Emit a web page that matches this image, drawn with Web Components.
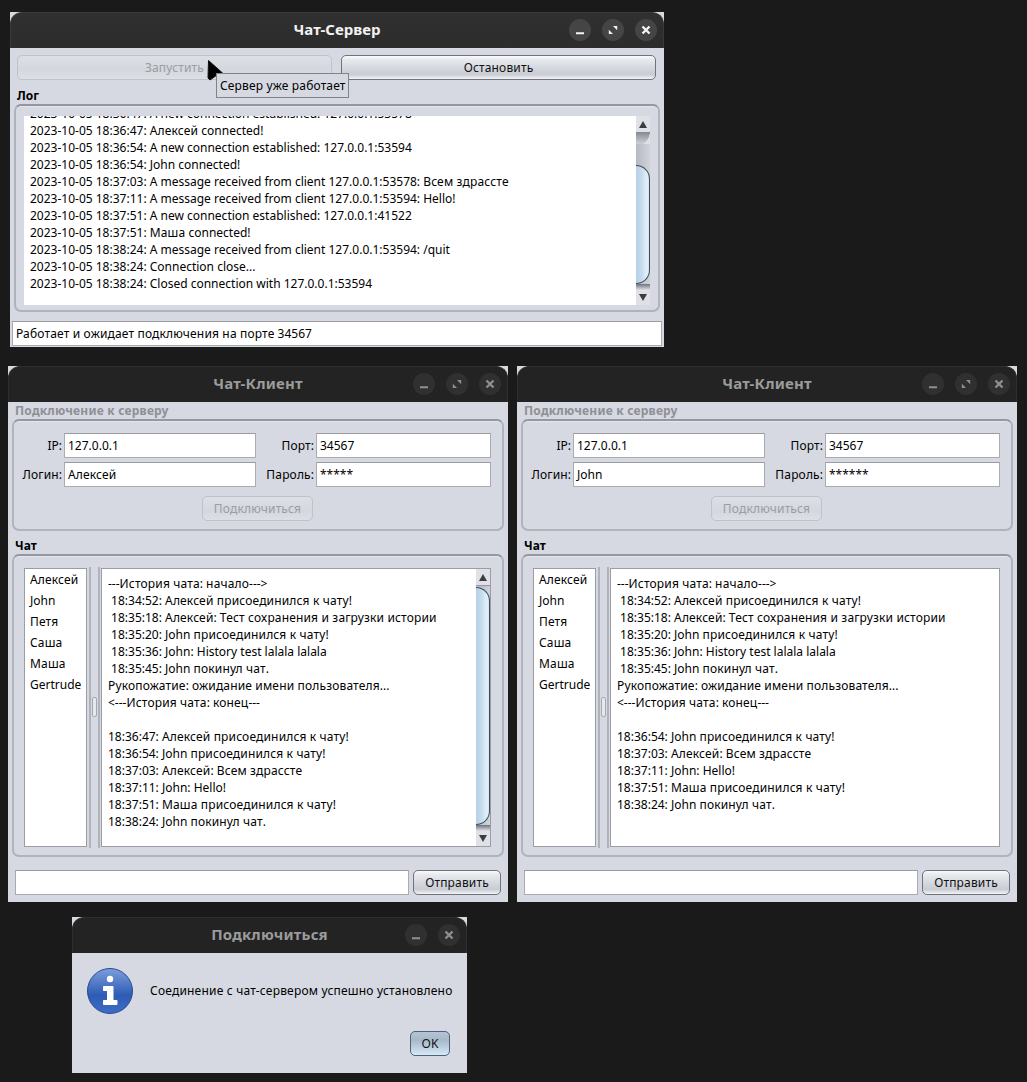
<!DOCTYPE html>
<html lang="ru">
<head>
<meta charset="utf-8">
<title>Чат</title>
<style>
    html, body { margin: 0; height: 100%; }
    body {
        position: relative;
        height: 1082px;
        overflow: hidden;
        background: #1a1a1a;
        color: #000;
        font: 12px/17px "Noto Sans", "Open Sans", sans-serif;
    }
    .cursor { position: absolute; left: 207px; top: 60px; }
    .tip {
        position: absolute; left: 216px; top: 73px; width: 133px; height: 25px;
        box-sizing: border-box; border: 1px solid #7f838a; background: #d6d9e1;
        padding: 3px 0 0 3px; white-space: nowrap;
    }
</style>
</head>
<body>

<template id="desk-window-tpl">
    <style>
        :host {
            position: absolute;
            display: flex;
            flex-direction: column;
            box-sizing: border-box;
            background: #d6d9e1;
        }
        .bar {
            flex: 0 0 auto;
            position: relative;
            display: flex;
            align-items: center;
            justify-content: center;
            height: 36px;
            box-sizing: border-box;
            padding-bottom: 4px;
            background: #232323;
            border: 1px solid #2e2e2e;
            border-bottom: 0;
            border-radius: 12px 12px 0 0;
            color: #9b9b9b;
            font: bold 15px "Noto Sans", sans-serif;
            letter-spacing: .2px;
        }
        :host([active]) .bar {
            background: linear-gradient(#303030, #2c2c2c);
            border-color: #3a3a3a;
            color: #f2f2f2;
            letter-spacing: 0;
        }
        .btns {
            position: absolute;
            right: 6px;
            top: 6px;
            display: flex;
            gap: 11px;
        }
        .btn { width: 22px; height: 22px; border-radius: 50%; background: #303030; display: block; }
        .btn path { stroke: #8f8f8f; fill: none; stroke-width: 2; }
        .btn path.x { stroke-width: 2.400; }
        .btn .f { fill: #8f8f8f; stroke: none; }
        :host([active]) .btn { background: #454545; }
        :host([active]) .btn path { stroke: #f4f4f4; }
        :host([active]) .btn .f { fill: #f4f4f4; stroke: none; }
        .body { flex: 1 1 auto; min-height: 0; display: flex; flex-direction: column; }
    </style>
    <div class="bar">
        <span id="name"></span>
        <div class="btns">
            <svg class="btn" viewBox="0 0 22 22"><path d="M7 14.300h8"/></svg>
            <svg class="btn" id="max" viewBox="0 0 22 22"><path class="f" d="M11 7h4.200v4.200zM6.800 10.800V15H11z"/></svg>
            <svg class="btn" viewBox="0 0 22 22"><path class="x" d="M7.500 7.500l7 7M14.500 7.500l-7 7"/></svg>
        </div>
    </div>
    <div class="body"><slot></slot></div>
</template>

<template id="push-button-tpl">
    <style>
        :host {
            display: flex;
            align-items: center;
            justify-content: center;
            box-sizing: border-box;
            height: 25px;
            border: 1px solid #6f737a;
            border-radius: 5px;
            background: linear-gradient(#fbfbfc 0, #e9ebef 14%, #d3d6dd 55%, #c9ccd4 80%, #f2f3f6 100%);
            color: #111;
            white-space: nowrap;
        }
        :host([disabled]) {
            border-color: #bfc2c9;
            background: linear-gradient(#dcdfe5, #d4d7de 60%, #dcdfe5);
            color: #9a9da3;
        }
        :host([default]) {
            border-color: #4d6178;
            background: linear-gradient(#b4c4d4 0, #a7b8c9 35%, #bed2e3 70%, #d8e9f6 100%);
        }
    </style>
    <slot></slot>
</template>

<template id="group-box-tpl">
    <style>
        :host { display: flex; flex-direction: column; }
        .label { height: 17px; line-height: 17px; padding-left: 3px; font-weight: bold; }
        :host([muted]) .label { color: #8e9095; letter-spacing: .2px; }
        .frame {
            flex: 1 1 auto;
            min-height: 0;
            box-sizing: border-box;
            border: 2px solid #b0b3ba;
            border-top-color: #94979e;
            border-radius: 7px;
            box-shadow: inset 0 1px 1px rgba(255, 255, 255, .35);
        }
    </style>
    <div class="label" id="label"></div>
    <div class="frame"><slot></slot></div>
</template>

<template id="line-field-tpl">
    <style>
        :host {
            display: block;
            box-sizing: border-box;
            height: 25px;
            padding: 2px 3px 0;
            background: #fff;
            border: 1px solid #a9abb0;
            border-top-color: #9a9ca1;
            white-space: nowrap;
            line-height: 20px;
            overflow: hidden;
        }
    </style>
    <slot></slot>
</template>

<template id="scroll-strip-tpl">
    <style>
        :host {
            display: flex;
            flex-direction: column;
            flex: 0 0 14px;
            box-sizing: border-box;
            background: linear-gradient(90deg, #b6b9c1, #d0d3da);
            overflow: hidden;
        }
        .cell {
            flex: 0 0 auto;
            height: 16px;
            display: flex;
            align-items: center;
            justify-content: center;
            background: #dfe1e6;
        }
        .cell.low { height: 15px; }
        .arc {
            flex: 0 0 auto;
            background:
                radial-gradient(circle 14px at 0 0, transparent 97%, #dfe1e6 100%),
                linear-gradient(#85888f, #c6cad2 90%);
        }
        .arc.down {
            height: 6px;
            background: linear-gradient(#6f7279, #dfe1e6);
        }
        .gap { flex: 0 0 auto; }
        .thumb {
            flex: 1 1 auto;
            min-height: 0;
            box-sizing: border-box;
            border: 1px solid #3f4d60;
            border-left: 0;
            border-radius: 0 14px 14px 0 / 0 14px 14px 0;
            background: linear-gradient(90deg, #b8d0e6 0, #c6dcee 45%, #e4f1fa 85%, #cfe2f1 100%);
        }
        svg { display: block; }
    </style>
    <div class="cell"><svg width="8" height="7" viewBox="0 0 8 7"><path d="M4 0l4 7H0z" fill="#3a3d42"/></svg></div>
    <div class="arc" id="arc"></div>
    <div class="gap" id="gap"></div>
    <div class="thumb"></div>
    <div class="arc down"></div>
    <div class="cell low"><svg width="8" height="7" viewBox="0 0 8 7"><path d="M0 0h8L4 7z" fill="#3a3d42"/></svg></div>
</template>

<template id="text-pane-tpl">
    <style>
        :host {
            display: flex;
            box-sizing: border-box;
            min-height: 0;
            min-width: 0;
            background: #fff;
        }
        :host([framed]) { border: 1px solid #9a9da5; }
        .clip { flex: 1 1 auto; min-width: 0; overflow: hidden; }
        .text {
            padding: var(--pane-top, 6px) 0 0 var(--pane-left, 6px);
            margin-top: var(--pane-shift, 0);
        }
    </style>
    <div class="clip"><div class="text"><slot></slot></div></div>
    <slot name="bar"></slot>
</template>

<template id="text-lines-tpl">
    <style>
        :host { display: block; }
        div { white-space: pre; min-height: 1lh; }
    </style>
</template>

<template id="server-panel-tpl">
    <style>
        :host { display: flex; flex-direction: column; height: 100%; }
        .top { display: grid; grid-template-columns: 315px 315px; gap: 9px; padding: 7px 8px 7px 7px; }
        group-box { margin: 0 4px 0 4px; height: 225px; }
        .inner { display: flex; height: 100%; box-sizing: border-box; padding: 10px 8px 5px 8px; }
        text-pane { flex: 1 1 auto; --pane-shift: -11px; --pane-top: 0px; }
        .status { margin: 9px 2px 0; }
    </style>
    <div class="top">
        <push-button disabled>Запустить</push-button>
        <push-button>Остановить</push-button>
    </div>
    <group-box label="Лог">
        <div class="inner">
            <text-pane><slot></slot><scroll-strip slot="bar" arc="12" gap="21"></scroll-strip></text-pane>
        </div>
    </group-box>
    <line-field class="status"><slot name="status"></slot></line-field>
</template>

<template id="client-panel-tpl">
    <style>
        :host { display: flex; flex-direction: column; height: 100%; }
        .conn { height: 129px; margin: 0 4px; }
        .form {
            display: grid;
            grid-template-columns: 48px 192px 56px 175px;
            column-gap: 2px;
            row-gap: 4px;
            padding: 12px 0 0 0;
            align-items: center;
        }
        .form span { text-align: right; white-space: nowrap; }
        .form push-button { grid-column: 1 / -1; justify-self: start; width: 111px; margin: 5px 0 0 188px; }
        .chat { height: 320px; margin: 6px 4px 0; }
        .split { display: flex; height: 100%; box-sizing: border-box; padding: 12px 11px 8px 10px; }
        .users { flex: 0 0 63px; --pane-top: 0px; --pane-left: 5px; line-height: 21px; }
        .handle {
            flex: 0 0 14px;
            box-sizing: border-box;
            display: flex;
            align-items: stretch;
            justify-content: center;
            margin: -1px 0;
        }
        .handle i {
            display: block;
            width: 11px;
            box-sizing: border-box;
            border-left: 2px solid #b0b3ba;
            border-right: 2px solid #b0b3ba;
            position: relative;
        }
        .handle b {
            position: absolute;
            left: 1px;
            top: 130px;
            width: 3px;
            height: 18px;
            border: 1px solid #a5a8af;
            border-radius: 2px;
            background: #e6e8ec;
        }
        .log { flex: 1 1 auto; --pane-top: 6px; }
        .send { display: flex; gap: 4px; margin: 13px 7px 0; }
        .send line-field { flex: 1 1 auto; }
        .send push-button { flex: 0 0 88px; }
    </style>
    <group-box class="conn" label="Подключение к серверу" muted>
        <div class="form">
            <span>IP:</span><line-field>127.0.0.1</line-field>
            <span>Порт:</span><line-field>34567</line-field>
            <span>Логин:</span><line-field id="login"></line-field>
            <span>Пароль:</span><line-field id="pass"></line-field>
            <push-button disabled>Подключиться</push-button>
        </div>
    </group-box>
    <group-box class="chat" label="Чат">
        <div class="split">
            <text-pane class="users" framed><slot name="users"></slot></text-pane>
            <div class="handle"><i><b></b></i></div>
            <text-pane class="log" framed><slot></slot><slot name="bar" slot="bar"></slot></text-pane>
        </div>
    </group-box>
    <div class="send">
        <line-field></line-field>
        <push-button>Отправить</push-button>
    </div>
</template>

<template id="note-panel-tpl">
    <style>
        :host { display: flex; flex-direction: column; height: 100%; --cyr: .2px; }
        .msg { display: flex; align-items: center; gap: 17px; padding: 15px 0 0 15px; height: 46px; }
        .msg span { margin-top: -2px; }
        svg { display: block; flex: 0 0 46px; }
        .foot { display: flex; justify-content: flex-end; margin-top: 17px; padding-right: 17px; }
        push-button { width: 40px; }
    </style>
    <div class="msg">
        <svg width="46" height="46" viewBox="0 0 46 46">
            <defs>
                <linearGradient id="ball" x1="0" y1="0" x2="0" y2="1">
                    <stop offset="0" stop-color="#7c9edb"/>
                    <stop offset=".6" stop-color="#2e5cb4"/>
                    <stop offset="1" stop-color="#3d6dc6"/>
                </linearGradient>
            </defs>
            <circle cx="23" cy="23" r="22.500" fill="url(#ball)" stroke="#2a4a92"/>
            <circle cx="23" cy="11" r="3.200" fill="#fff"/>
            <path fill="#fff" stroke="#fff" stroke-linejoin="round" d="M16.500 18.500h9.500v14h4v4h-13.500v-4h4v-10h-4z"/>
        </svg>
        <span><slot></slot></span>
    </div>
    <div class="foot"><push-button default>OK</push-button></div>
</template>

<desk-window active name="Чат-Сервер" style="left:10px;top:12px;width:654px;height:335px">
    <server-panel>
        <text-lines>2023-10-05 18:36:47: A new connection established: 127.0.0.1:53578
2023-10-05 18:36:47: Алексей connected!
2023-10-05 18:36:54: A new connection established: 127.0.0.1:53594
2023-10-05 18:36:54: John connected!
2023-10-05 18:37:03: A message received from client 127.0.0.1:53578: Всем здрассте
2023-10-05 18:37:11: A message received from client 127.0.0.1:53594: Hello!
2023-10-05 18:37:51: A new connection established: 127.0.0.1:41522
2023-10-05 18:37:51: Маша connected!
2023-10-05 18:38:24: A message received from client 127.0.0.1:53594: /quit
2023-10-05 18:38:24: Connection close...
2023-10-05 18:38:24: Closed connection with 127.0.0.1:53594</text-lines>
        <span slot="status">Работает и ожидает подключения на порте 34567</span>
    </server-panel>
</desk-window>

<desk-window name="Чат-Клиент" style="left:8px;top:366px;width:500px;height:536px">
    <client-panel login="Алексей" pass="*****">
        <text-lines slot="users">Алексей
John
Петя
Саша
Маша
Gertrude</text-lines>
        <scroll-strip slot="bar" arc="2" gap="0"></scroll-strip>
        <text-lines>---История чата: начало---&gt;
 18:34:52: Алексей присоединился к чату!
 18:35:18: Алексей: Тест сохранения и загрузки истории
 18:35:20: John присоединился к чату!
 18:35:36: John: History test lalala lalala
 18:35:45: John покинул чат.
Рукопожатие: ожидание имени пользователя...
&lt;---История чата: конец---

18:36:47: Алексей присоединился к чату!
18:36:54: John присоединился к чату!
18:37:03: Алексей: Всем здрассте
18:37:11: John: Hello!
18:37:51: Маша присоединился к чату!
18:38:24: John покинул чат.</text-lines>
    </client-panel>
</desk-window>

<desk-window name="Чат-Клиент" style="left:517px;top:366px;width:500px;height:536px">
    <client-panel login="John" pass="******">
        <text-lines slot="users">Алексей
John
Петя
Саша
Маша
Gertrude</text-lines>
        <text-lines>---История чата: начало---&gt;
 18:34:52: Алексей присоединился к чату!
 18:35:18: Алексей: Тест сохранения и загрузки истории
 18:35:20: John присоединился к чату!
 18:35:36: John: History test lalala lalala
 18:35:45: John покинул чат.
Рукопожатие: ожидание имени пользователя...
&lt;---История чата: конец---

18:36:54: John присоединился к чату!
18:37:03: Алексей: Всем здрассте
18:37:11: John: Hello!
18:37:51: Маша присоединился к чату!
18:38:24: John покинул чат.</text-lines>
    </client-panel>
</desk-window>

<desk-window name="Подключиться" no-max style="left:72px;top:917px;width:395px;height:156px">
    <note-panel>Соединение с чат-сервером успешно установлено</note-panel>
</desk-window>

<svg class="cursor" width="17" height="21" viewBox="0 0 17 21"><path d="M1.500.5L15.500 13l-5.500 2-7 5-2-2z" fill="#000" stroke="#111" stroke-linejoin="round"/></svg>
<div class="tip">Сервер уже работает</div>

<script>
    // the reference draws cyrillic a little wider than the same font does here
    const CYR = /[А-Яа-яЁё]+(?:[ -]+[А-Яа-яЁё]+)*/g;

    function cyrillicHtml(text) {
        return text
            .replace(/&/g, '&amp;').replace(/</g, '&lt;')
            .replace(CYR, '<span style="letter-spacing:var(--cyr,.16px)">$&</span>');
    }

    function widenCyrillic(top) {
        const walker = document.createTreeWalker(top, NodeFilter.SHOW_TEXT);
        const nodes = [];
        while (walker.nextNode()) {
            const parent = walker.currentNode.parentNode.nodeName;
            if (parent !== 'STYLE' && parent !== 'SCRIPT' && parent !== 'TEXT-LINES') nodes.push(walker.currentNode);
        }
        nodes.forEach((node) => {
            if (!node.nodeValue.match(CYR)) return;
            const box = node.ownerDocument.createElement('span');
            box.innerHTML = cyrillicHtml(node.nodeValue);
            node.replaceWith(...box.childNodes);
        });
    }

    widenCyrillic(document.body);
    document.querySelectorAll('template').forEach((t) => widenCyrillic(t.content));

    function shadow(el, id) {
        const root = el.attachShadow({ mode: 'open' });
        root.appendChild(document.getElementById(id).content.cloneNode(true));
        return root;
    }

    class DeskWindow extends HTMLElement {
        constructor() {
            super();
            const root = shadow(this, 'desk-window-tpl');
            root.getElementById('name').textContent = this.getAttribute('name');
            if (this.hasAttribute('no-max')) root.getElementById('max').remove();
        }
    }

    class PushButton extends HTMLElement {
        constructor() { super(); shadow(this, 'push-button-tpl'); }
    }

    class GroupBox extends HTMLElement {
        constructor() {
            super();
            shadow(this, 'group-box-tpl').getElementById('label').textContent = this.getAttribute('label');
        }
    }

    class LineField extends HTMLElement {
        constructor() { super(); shadow(this, 'line-field-tpl'); }
    }

    class ScrollStrip extends HTMLElement {
        constructor() {
            super();
            const root = shadow(this, 'scroll-strip-tpl');
            root.getElementById('arc').style.height = this.getAttribute('arc') + 'px';
            root.getElementById('gap').style.height = this.getAttribute('gap') + 'px';
        }
    }

    class TextPane extends HTMLElement {
        constructor() { super(); shadow(this, 'text-pane-tpl'); }
    }

    // one block per line, so a line's text box never covers its neighbours
    class TextLines extends HTMLElement {
        constructor() {
            super();
            const root = shadow(this, 'text-lines-tpl');
            this.textContent.split('\n').forEach((line) => {
                const row = document.createElement('div');
                row.innerHTML = cyrillicHtml(line);
                root.appendChild(row);
            });
        }
        connectedCallback() {
            this.textContent = '';
        }
    }

    class ServerPanel extends HTMLElement {
        constructor() { super(); shadow(this, 'server-panel-tpl'); }
    }

    class ClientPanel extends HTMLElement {
        constructor() {
            super();
            const root = shadow(this, 'client-panel-tpl');
            root.getElementById('login').innerHTML = cyrillicHtml(this.getAttribute('login'));
            root.getElementById('pass').textContent = this.getAttribute('pass');
        }
    }

    class NotePanel extends HTMLElement {
        constructor() { super(); shadow(this, 'note-panel-tpl'); }
    }

    customElements.define('desk-window', DeskWindow);
    customElements.define('push-button', PushButton);
    customElements.define('group-box', GroupBox);
    customElements.define('line-field', LineField);
    customElements.define('scroll-strip', ScrollStrip);
    customElements.define('text-pane', TextPane);
    customElements.define('text-lines', TextLines);
    customElements.define('server-panel', ServerPanel);
    customElements.define('client-panel', ClientPanel);
    customElements.define('note-panel', NotePanel);
</script>
</body>
</html>
